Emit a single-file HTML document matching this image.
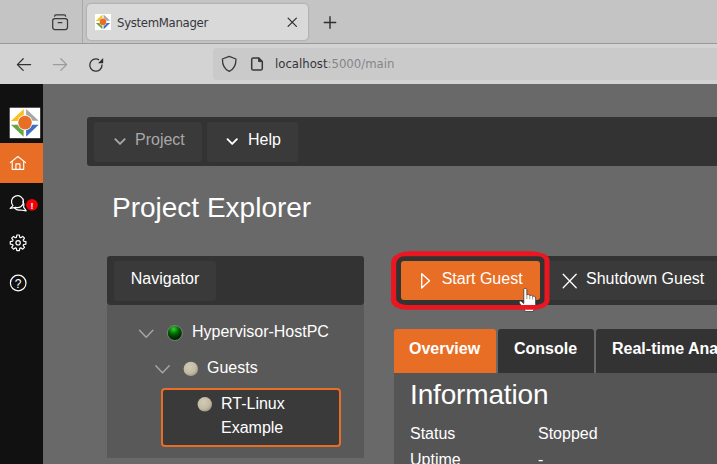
<!DOCTYPE html>
<html lang="en">
<head>
<meta charset="utf-8">
<title>SystemManager</title>
<style>
*{box-sizing:border-box;margin:0;padding:0}
html,body{width:717px;height:464px;overflow:hidden;background:#696969}
body{position:relative;font-family:"Liberation Sans",sans-serif;color:#fff}
.abs{position:absolute}
/* browser chrome */
#tabbar{left:0;top:0;width:717px;height:44px;background:#c4c4c4}
#tab{left:87px;top:4px;width:221px;height:35.5px;background:#d9d9d9;border-radius:4px;box-shadow:0 0 2px rgba(0,0,0,.3)}
#tabtitle{left:117px;top:13.7px;font:13px/18px "DejaVu Sans Condensed","DejaVu Sans","Liberation Sans",sans-serif;color:#36363b;letter-spacing:-0.3px;white-space:nowrap}
#navbar{left:0;top:43px;width:717px;height:41px;background:#d3d3d3;border-top:1px solid #999}
#urlbox{left:213px;top:48px;width:520px;height:32px;background:#cacaca;border-radius:4px}
#url{left:275px;top:55px;font:13px/18px "DejaVu Sans Condensed","DejaVu Sans","Liberation Sans",sans-serif;color:#34343a;letter-spacing:0;white-space:nowrap}
#url span{color:#858589}
/* app */
#side{left:0;top:84px;width:43px;height:380px;background:#111}
#logo{left:9.7px;top:107.7px;width:30.5px;height:30.5px}
#home{left:0;top:142.7px;width:43px;height:40px;background:#e96e25}
#menubar{left:87px;top:117px;width:640px;height:49px;background:#333;border-radius:3px}
.mbtn{top:122px;height:39.5px;background:#3a3a3a;border-radius:3px;font-size:16px;line-height:36px;white-space:nowrap}
#h1{left:112px;top:191px;font-size:28px;line-height:34px;white-space:nowrap;color:#fff}
#navhead{left:107px;top:256px;width:257px;height:49px;background:#333;border-radius:3px}
#navtab{left:114px;top:261px;width:102px;height:39.5px;background:#3a3a3a;border-radius:3px;font-size:16px;line-height:35px;text-align:center}
#tree{left:107px;top:305px;width:257px;height:153px;background:#595959}
.tl{font-size:16px;line-height:24px;white-space:nowrap;color:#fff}
#sel{left:161px;top:387.5px;width:180px;height:59.5px;background:#3a3a3a;border:2px solid #e96e25;border-radius:4px}
#toolbar{left:393px;top:256px;width:340px;height:49px;background:#333;border-radius:3px}
#start{left:400.5px;top:261px;width:139.5px;height:39px;background:#e96e25;border-radius:3px}
#shut{left:545px;top:261px;width:190px;height:39px;background:#3a3a3a;border-radius:3px}
.tb{font-size:16px;line-height:24px;white-space:nowrap}
.tab{top:329px;height:43.7px;border-radius:3px 3px 0 0;font-weight:bold;font-size:16px;line-height:40px;white-space:nowrap}
#info{left:394px;top:372.7px;width:340px;height:100px;background:#555}
</style>
</head>
<body>
<div class="abs" id="tabbar"></div>
<div class="abs" id="tab"></div>
<div class="abs" id="tabtitle">SystemManager</div>
<div class="abs" id="navbar"></div>
<div class="abs" id="urlbox"></div>
<div class="abs" id="url">localhost<span>:5000/main</span></div>

<div class="abs" id="side"></div>
<div class="abs" id="home"></div>

<div class="abs" id="menubar"></div>
<div class="abs mbtn" style="left:94px;width:108px;color:#a8a8a8;padding-left:41px">Project</div>
<div class="abs mbtn" style="left:207px;width:91px;color:#fff;padding-left:41px">Help</div>

<div class="abs" id="h1">Project Explorer</div>

<div class="abs" id="navhead"></div>
<div class="abs" id="navtab">Navigator</div>
<div class="abs" id="tree"></div>
<div class="abs tl" style="left:192px;top:320px">Hypervisor-HostPC</div>
<div class="abs tl" style="left:207px;top:356px">Guests</div>
<div class="abs" id="sel"></div>
<div class="abs tl" style="left:221px;top:392px">RT-Linux<br>Example</div>

<div class="abs" id="toolbar"></div>
<div class="abs" id="start"></div>
<div class="abs" id="shut"></div>
<div class="abs tb" style="left:441.7px;top:266.7px">Start Guest</div>
<div class="abs tb" style="left:586px;top:267px">Shutdown Guest</div>


<div class="abs tab" style="left:394px;width:102px;background:#e96e25;padding-left:15px">Overview</div>
<div class="abs tab" style="left:498px;width:96px;background:#333;padding-left:16px">Console</div>
<div class="abs tab" style="left:596px;width:140px;background:#333;padding-left:16px">Real-time Analysis</div>
<div class="abs" id="info"></div>
<div class="abs" style="left:410px;top:378px;font-size:28px;line-height:34px;letter-spacing:-0.15px">Information</div>
<div class="abs tl" style="left:410px;top:422px">Status</div>
<div class="abs tl" style="left:538px;top:422px">Stopped</div>
<div class="abs tl" style="left:410px;top:448px">Uptime</div>
<div class="abs tl" style="left:538px;top:448px">-</div>

<svg class="abs" id="icons" style="left:0;top:0" width="717" height="464" viewBox="0 0 717 464" fill="none">
<defs>
<radialGradient id="gs" cx="0.42" cy="0.24" r="0.74"><stop offset="0" stop-color="#3acb3a"/><stop offset="0.2" stop-color="#17a517"/><stop offset="0.45" stop-color="#066606"/><stop offset="0.72" stop-color="#013a01"/><stop offset="1" stop-color="#002000"/></radialGradient>
<radialGradient id="bs" cx="0.4" cy="0.35" r="0.7"><stop offset="0" stop-color="#d2cab5"/><stop offset="0.65" stop-color="#c3baa4"/><stop offset="1" stop-color="#9c947f"/></radialGradient>
</defs>
<!-- tab bar -->
<line x1="82.5" y1="0" x2="82.5" y2="43" stroke="#a9a9a9" stroke-width="1"/>
<g stroke="#38383d" stroke-width="1.25" stroke-linecap="round" stroke-linejoin="round">
<rect x="52.7" y="18.5" width="14.8" height="11" rx="2.2"/>
<path d="M54.6 16.2 Q54.6 14.8 56 14.8 H64.2 Q65.6 14.8 65.6 16.2"/>
<line x1="58.2" y1="22.7" x2="61.8" y2="22.7"/>
</g>
<g stroke="#2e2e33" stroke-width="1.2" stroke-linecap="round">
<path d="M288.1 18.1 L296.4 26.4 M296.4 18.1 L288.1 26.4"/>
<path d="M324.3 22.5 H335.7 M330 16.8 V28.2" stroke-width="1.4"/>
</g>
<g transform="translate(95,14)">
<rect x="0" y="0" width="16" height="16" fill="#fff"/>
<polygon points="7.4,0.6 7.4,7 0.8,7" fill="#fcc018"/>
<polygon points="8.6,0.6 8.6,6.8 15.2,6.8" fill="#a6a6a6"/>
<polygon points="8.6,8.9 15.2,8.9 8.6,15.2" fill="#3f6fc4"/>
<polygon points="0.8,8.9 7.4,8.9 7.4,15.2" fill="#69a543"/>
<circle cx="8" cy="7.9" r="3.6" fill="#fff"/>
<circle cx="8" cy="7.9" r="3.3" fill="#e96e25"/>
</g>
<!-- nav bar -->
<g stroke="#323237" stroke-width="1.3" stroke-linecap="round" stroke-linejoin="round">
<path d="M30.6 64.6 H17.4 M23.2 58.8 L17.4 64.6 L23.2 70.4"/>
<path d="M53.4 64.6 H66.6 M60.8 58.8 L66.6 64.6 L60.8 70.4" stroke="#9b9b9b"/>
<path d="M102 65 A6.1 6.1 0 1 1 98.6 59.6"/>
</g>
<path d="M103.2 58 V63.2 H98 Z" fill="#2b2b30"/>
<path d="M229.2 56.4 L236 59 C236 65.5 233.8 69.4 229.2 71.4 C224.6 69.4 222.4 65.5 222.4 59 Z" stroke="#38383d" stroke-width="1.3" stroke-linejoin="round"/>
<path d="M253.4 57.9 H258.6 L262.3 61.6 V68.4 Q262.3 70.1 260.6 70.1 H253.4 Q251.7 70.1 251.7 68.4 V59.6 Q251.7 57.9 253.4 57.9 Z" stroke="#38383d" stroke-width="1.5" stroke-linejoin="round"/>
<path d="M258.6 57.9 L262.3 61.6 H258.6 Z" fill="#38383d" stroke="#38383d" stroke-width="1"/>
<!-- sidebar -->
<g transform="translate(9.7,107.7)"><rect x="0" y="0" width="30.5" height="30.5" fill="#fff"/>
<polygon points="14.1,1.2 14.1,13.3 1.2,13.3" fill="#fcc018"/>
<polygon points="16.4,1.2 16.4,13 29,13" fill="#a6a6a6"/>
<polygon points="16.4,17.1 29,17.1 16.4,29.1" fill="#3f6fc4"/>
<polygon points="1.3,17.1 13.9,17.1 13.9,29" fill="#69a543"/>
<circle cx="15.3" cy="14.9" r="7.6" fill="#fff"/>
<circle cx="15.3" cy="14.9" r="6.8" fill="#e96e25"/></g>
<g stroke="#fff" stroke-width="1.15" stroke-linejoin="round" stroke-linecap="round">
<path d="M10.3 162.6 L17.9 156.5 L25.6 162.6"/>
<path d="M12.2 161.4 V169.3 H23.7 V161.4"/>
<path d="M15.9 169.3 V163.8 H19.9 V169.3"/>
</g>
<g stroke="#fff" stroke-width="1.2" stroke-linejoin="round" stroke-linecap="round">
<path d="M12.9 205.6 A6 6 0 1 1 15.6 207.4 L10.2 208.3 Z"/>
<path d="M22.9 201.5 A6 6 0 0 1 23.6 207.2 L26.2 210.8 L20.6 210 A6 6 0 0 1 14.6 208"/>
</g>
<circle cx="32" cy="204.8" r="5.9" fill="#f00008"/>
<text x="32" y="208.6" text-anchor="middle" font-family="Liberation Sans, sans-serif" font-weight="bold" font-size="9" fill="#fff">!</text>
<g stroke="#fff" stroke-width="1.2" stroke-linejoin="round">
<path d="M16.42 237.35 L16.84 235.00 L19.36 235.00 L19.78 237.35 L20.76 237.76 L22.72 236.40 L24.50 238.18 L23.14 240.14 L23.55 241.12 L25.90 241.54 L25.90 244.06 L23.55 244.48 L23.14 245.46 L24.50 247.42 L22.72 249.20 L20.76 247.84 L19.78 248.25 L19.36 250.60 L16.84 250.60 L16.42 248.25 L15.44 247.84 L13.48 249.20 L11.70 247.42 L13.06 245.46 L12.65 244.48 L10.30 244.06 L10.30 241.54 L12.65 241.12 L13.06 240.14 L11.70 238.18 L13.48 236.40 L15.44 237.76 Z"/>
<circle cx="18.1" cy="242.8" r="2.2"/>
<circle cx="18.2" cy="283" r="7.8"/>
</g>
<text x="18.2" y="287.6" text-anchor="middle" font-family="Liberation Sans, sans-serif" font-size="12" fill="#fff">?</text>
<!-- menu chevrons -->
<path d="M115.3 139.2 L120 143.9 L124.7 139.2" stroke="#a8a8a8" stroke-width="1.9" stroke-linecap="round" stroke-linejoin="round"/>
<path d="M227.5 139.2 L232.2 143.9 L236.9 139.2" stroke="#fff" stroke-width="1.9" stroke-linecap="round" stroke-linejoin="round"/>
<!-- tree -->
<path d="M139.5 330.3 L146.2 337.3 L152.9 330.3" stroke="#a3a8ae" stroke-width="1.4" stroke-linecap="round" stroke-linejoin="round"/>
<path d="M155.8 365.7 L162.5 372.7 L169.2 365.7" stroke="#a3a8ae" stroke-width="1.4" stroke-linecap="round" stroke-linejoin="round"/>
<circle cx="174.8" cy="333" r="7.5" fill="url(#gs)" stroke="#858585" stroke-width="0.9"/>
<circle cx="190.8" cy="368.9" r="7.2" fill="url(#bs)"/>
<circle cx="204.8" cy="404.3" r="7.2" fill="url(#bs)"/>
<!-- toolbar icons -->
<path d="M421.7 273.7 L429.5 280.8 L421.7 288 Z" stroke="#fff" stroke-width="1.4" stroke-linejoin="round"/>
<path d="M563.2 274.3 L576.2 287.7 M576.2 274.3 L563.2 287.7" stroke="#fff" stroke-width="1.3" stroke-linecap="round"/>
<!-- cursor -->
<g transform="translate(519,288)">
<path d="M4.8 1.4 C4.8 0.1 7.8 0.1 7.8 1.4 V7.2 C8.4 6 10.8 6.4 10.8 7.8 C11.4 6.8 13.6 7.2 13.6 8.6 C14.2 7.8 16.6 8.2 16.6 10 V16.5 C16.6 19.5 15 20.5 14.2 23.5 H6.3 C5.3 20.5 2.8 18.2 0.6 15.2 C-0.5 13.6 1.2 12.4 2.5 13.5 L4.8 15.6 Z" fill="#fff" stroke="#2a2a2a" stroke-width="0.7" stroke-linejoin="round"/>
<path d="M7.9 7.6 V11 M10.8 8.2 V11.2 M13.7 9 V11.6" stroke="#444" stroke-width="0.55"/>
</g>
<!-- red ring -->
<path d="M410.7 251.3 H530.2 A19.3 8.7 0 0 1 549.5 260.0 V300.3 A16.5 9.5 0 0 1 533.0 309.8 H407.1 A16 9 0 0 1 391.1 300.8 V262.3 A19.6 11 0 0 1 410.7 251.3 Z M404.2 256.3 H538.5 A6 5.3 0 0 1 544.5 261.6 V299.9 A9 5 0 0 1 535.5 304.9 H407.2 A11 6 0 0 1 396.2 298.9 V263.8 A8 7.5 0 0 1 404.2 256.3 Z" fill="#ec1620" fill-rule="evenodd"/>
</svg>
</body>
</html>
